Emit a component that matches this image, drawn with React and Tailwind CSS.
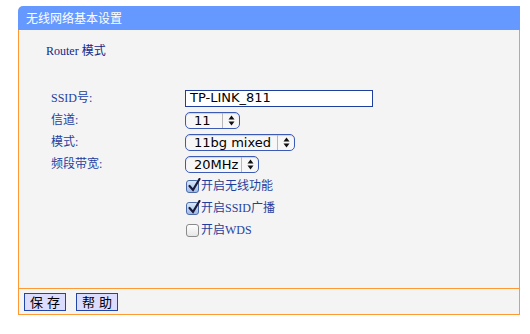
import React from 'react';

const labelCls = "text-[#1f3f9f]";

const Select = ({ value, width }) => (
  <div
    className="flex items-center h-[17px] rounded-[5px] border border-[#3b5bb5] bg-[#f7f7f7] shadow-[inset_0_1px_1px_rgba(0,0,0,0.15)]"
    style={{ width }}
  >
    <span className="flex-1 pl-[8px] text-[13px] leading-none text-black" style={{ fontFamily: '"DejaVu Sans", sans-serif' }}>
      {value}
    </span>
    <span className="flex flex-col items-center justify-center w-[17px] h-full border-l border-[#b8b8b8]">
      <svg width="7" height="11" viewBox="0 0 7 11">
        <path d="M3.5 0.5 L6.5 4.5 L0.5 4.5 Z" fill="#111" />
        <path d="M3.5 10.5 L6.5 6.5 L0.5 6.5 Z" fill="#111" />
      </svg>
    </span>
  </div>
);

const Check = ({ checked, label }) => (
  <div className="flex items-center h-[22px]">
    <span
      className={`relative w-[13px] h-[13px] ml-[1px] rounded-[3px] border ${
        checked ? 'border-[#4a6aa8] bg-gradient-to-b from-[#dbe8fa] to-[#9fbde8]' : 'border-[#8a8a8a] bg-gradient-to-b from-white to-[#e6e6e6]'
      }`}
    >
      {checked && (
        <svg className="absolute left-[1px] -top-[3px]" width="13" height="14" viewBox="0 0 13 14">
          <path d="M1.5 8 L5 12 L11.5 1" fill="none" stroke="#1a1a3a" strokeWidth="2.2" strokeLinecap="round" />
        </svg>
      )}
    </span>
    <span className={`ml-[2px] text-[12px] ${labelCls}`}>{label}</span>
  </div>
);

export default function App() {
  return (
    <div
      className="w-[530px] h-[334px] bg-white pt-[6px] pl-[18px]"
      style={{ fontFamily: '"Liberation Serif", "Noto Sans CJK SC", serif' }}
    >
      <div className="w-[502px]">
        {/* title bar */}
        <div className="h-[24px] bg-[#6699ff] rounded-tl-[5px] flex items-center pl-[8px] text-white text-[12px]" style={{ fontFamily: '"Noto Sans CJK SC", sans-serif' }}>
          无线网络基本设置
        </div>

        {/* body */}
        <div className="h-[258px] bg-[#f4f4f4] border-l border-r border-[#ff9933] pt-[12px]">
          <div className="pl-[27px] text-[12px] text-[#12288a]">Router 模式</div>

          <div className="grid grid-cols-[134px_1fr] mt-[27px] pl-[32px]">
            <div className={`h-[22px] flex items-center text-[12px] ${labelCls}`}>SSID号:</div>
            <div className="h-[22px] flex items-center">
              <div className="w-[188px] h-[17px] bg-white border border-[#1f3f9f] flex items-center pl-[4px] text-[13px] text-black" style={{ fontFamily: '"DejaVu Sans", sans-serif' }}>
                TP-LINK_811
              </div>
            </div>

            <div className={`h-[22px] flex items-center text-[12px] ${labelCls}`}>信道:</div>
            <div className="h-[22px] flex items-center"><Select value="11" width={55} /></div>

            <div className={`h-[22px] flex items-center text-[12px] ${labelCls}`}>模式:</div>
            <div className="h-[22px] flex items-center"><Select value="11bg mixed" width={110} /></div>

            <div className={`h-[22px] flex items-center text-[12px] ${labelCls}`}>频段带宽:</div>
            <div className="h-[22px] flex items-center"><Select value="20MHz" width={74} /></div>

            <div />
            <div className="flex flex-col">
              <Check checked label="开启无线功能" />
              <Check checked label="开启SSID广播" />
              <Check label="开启WDS" />
            </div>
          </div>
        </div>

        {/* footer */}
        <div className="h-[27px] bg-[#f4f4f4] border border-[#ff9933] flex items-center gap-[10px] pl-[5px]">
          <button className="w-[42px] h-[18px] bg-[#dcdcff] border border-[#2244aa] text-[13px] text-black leading-none tracking-[4px] pl-[4px]" style={{ fontFamily: '"Noto Sans CJK SC", sans-serif' }}>保存</button>
          <button className="w-[42px] h-[18px] bg-[#dcdcff] border border-[#2244aa] text-[13px] text-black leading-none tracking-[4px] pl-[4px]" style={{ fontFamily: '"Noto Sans CJK SC", sans-serif' }}>帮助</button>
        </div>
      </div>
    </div>
  );
}
